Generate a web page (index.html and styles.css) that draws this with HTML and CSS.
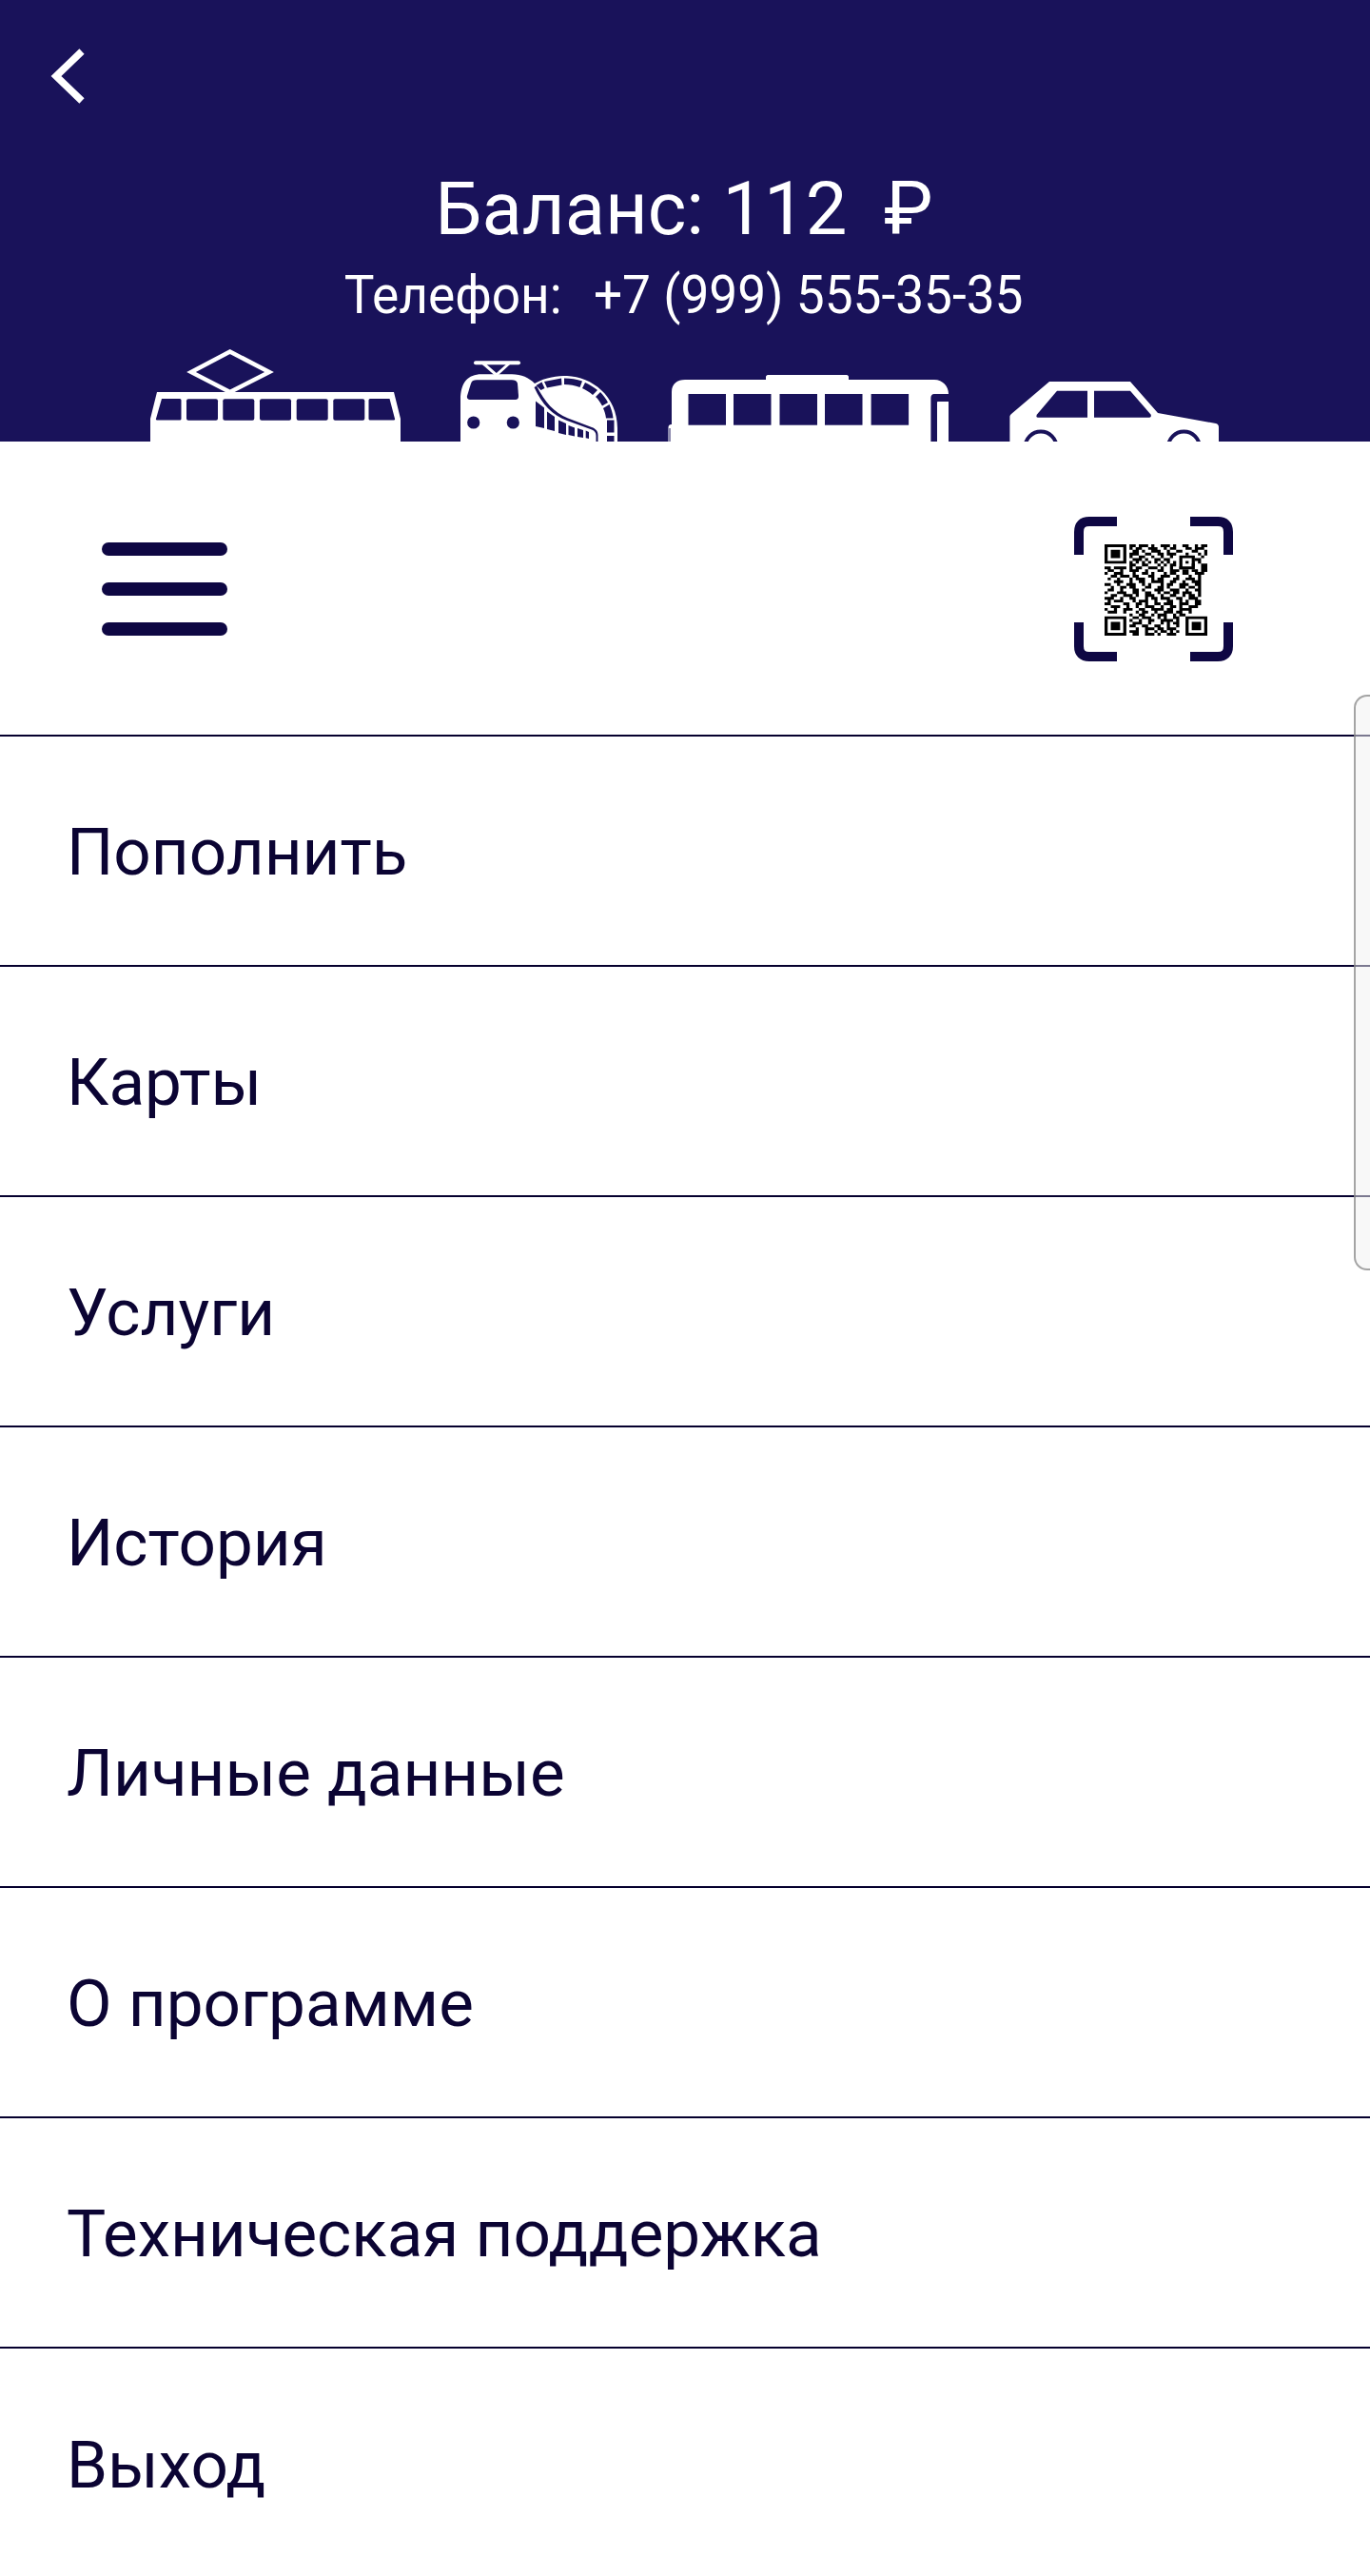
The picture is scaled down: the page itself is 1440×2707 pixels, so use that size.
FILE: index.html
```html
<!DOCTYPE html>
<html lang="ru">
<head>
<meta charset="utf-8">
<title>Меню</title>
<link rel="stylesheet" href="styles.css">
</head>
<body>
<div class="page">
  <header class="hero">
    <a class="back" href="#" aria-label="Назад">
      <svg class="back-icon" viewBox="0 0 38 60"><path d="M34 4 7 30l27 26"/></svg>
    </a>
    <div class="balance">Баланс: 112&nbsp; ₽</div>
    <div class="phone"><span>Телефон:</span><span>+7 (999) 555-35-35</span></div>
    <svg class="transport" viewBox="158 365 1124 99" aria-hidden="true">
      <g class="tr-line">
        <path d="M241.7 369.5 283 391 241.7 412 201 391z" stroke-width="4.5"/>
      </g>
      <path class="tr-fill" d="M165 412H414L421 440V464H158V440Z"/>
      <g class="tr-dark">
        <path d="M170 419h19a1.500 1.500 0 0 1 1.500 1.500V440a1.500 1.500 0 0 1-1.500 1.500H165a1 1 0 0 1-1-1.500z"/>
        <rect x="196" y="419.300" width="33" height="22.400" rx="2"/>
        <rect x="234.300" y="419.300" width="33" height="22.400" rx="2"/>
        <rect x="273" y="419.300" width="33" height="22.400" rx="2"/>
        <rect x="311.700" y="419.300" width="33" height="22.400" rx="2"/>
        <rect x="350.300" y="419.300" width="33" height="22.400" rx="2"/>
        <path d="M390.500 419h19l5.500 21a1 1 0 0 1-1 1.500h-25a1.500 1.500 0 0 1-1.500-1.500v-19.500a1.500 1.500 0 0 1 1.500-1.500z"/>
      </g>

      <rect class="tr-fill" x="498" y="379.300" width="49" height="4" rx="2"/>
      <path class="tr-line" d="M508 382l13.700 12L535 382" stroke-width="3"/>
      <path class="tr-fill" d="M562 403C574 396 586 395 596 395 622 396 649 416 649 450V464H484V420C484 402 492 393.300 506 393.300H538C548 393.300 556 397 562 403Z"/>
      <g class="tr-dark">
        <path d="M501 399.300H538C541 399.300 543 400 544 403L545 416C545 419 544 420 541 420H494C491.500 420 490.500 418 491 416L495 403C496 400 498 399.300 501 399.300Z"/>
        <circle cx="497.700" cy="444" r="6.600"/>
        <circle cx="539.300" cy="444" r="6.600"/>
        <path d="M563.500 405l6-3.500 3 6.500-4 2z"/>
        <path d="M572 401l18-3.500 0.500 7-15.500 3z"/>
        <path d="M593 397.500c7 0 13 1 19 3l-2.500 6.500c-5-2-11-3-16.500-3z"/>
        <path d="M615 402c5 2 9 5 13 8l-5 5c-3-3-7-5-11-7z"/>
        <path d="M631 412c3 3 6 7 8 11l-6 3.500c-2-3-4-7-7-9.500z"/>
        <path d="M640.500 425c2 5 3.500 9 4 14.500h-7.500c-0.500-4-1.500-7-3-10.500z"/>
        <rect x="638" y="441.500" width="7.500" height="13"/>
        <rect x="638" y="458" width="7.500" height="6"/>
        <path d="M561.500 407C570 425 580 436 596 442L622 451.500C625 452.500 626.500 455 626.500 458V464H628.500V457C628.500 453 626 450.500 622 449L597 439.500C582 433 573 423 564 405.500Z"/>
        <path d="M563 421.500l9 7v21.500l-9-2z"/>
        <path d="M575 432.500l8 5.500v15l-8-2z"/>
        <path d="M587 441.500l8 3.500v12l-8-2z"/>
        <path d="M597.500 447l6.500 2.500V458.500l-6.500-1.500z"/>
        <path d="M607 450l6 2v8l-6-1z"/>
        <path d="M615.700 452.500l3.300 1.500v7l-3.300-.7z"/>
      </g>

      <path class="tr-fill" d="M706 464V412C706 403 712 399 720 399H805V396C805 395 806 394 807 394H890C891 394 892 395 892 396V399H982C991 399 997 406 997 414V464Z"/>
      <path class="tr-fill" d="M702.500 464V449C702.500 447 704 446 705.500 446H711.600V464Z"/>
      <rect class="tr-dark" x="703.500" y="450" width="1" height="14"/>
      <g class="tr-dark">
        <rect x="723.500" y="414" width="39.500" height="32.700"/>
        <rect x="771" y="414" width="39.500" height="32.700"/>
        <rect x="819.500" y="414" width="39.500" height="32.700"/>
        <rect x="867" y="414" width="39.500" height="32.700"/>
        <rect x="915.600" y="414" width="39.500" height="32.700"/>
        <path d="M997 414H982C979.500 414 978.400 416 978.400 418V464H985V423C985 422.300 985.500 422 986 422H997Z"/>
      </g>

      <path class="tr-fill" d="M1103 401H1188L1217 434 1278 445C1280 445.500 1281 447 1281 449V464H1061.400V438C1061.400 437 1062 436 1063 435Z"/>
      <g class="tr-dark">
        <path d="M1111 410.700H1143V438.700H1091C1089 438.700 1089 437 1090 435.500Z"/>
        <path d="M1150 410.700H1188L1209.500 435.500C1210.500 437 1209.500 438.700 1208 438.700H1150Z"/>
      </g>
      <g class="tr-arch">
        <circle cx="1094" cy="470" r="16.500"/>
        <circle cx="1244.400" cy="470" r="16.500"/>
      </g>
    </svg>
  </header>

  <div class="toolbar">
    <button class="burger" type="button" aria-label="Меню">
      <span class="burger-bar"></span>
      <span class="burger-bar"></span>
      <span class="burger-bar"></span>
    </button>
    <div class="qr">
      <svg class="qr-frame" viewBox="0 0 167 152" aria-hidden="true">
        <path d="M45 5H16Q5 5 5 16V40M122 5H151Q162 5 162 16V40M5 111V136Q5 147 16 147H45M162 111V136Q162 147 151 147H122"/>
      </svg>
      <svg class="qr-code" viewBox="0 0 33 33" preserveAspectRatio="none" aria-hidden="true">
        <path fill-rule="evenodd" d="M0 0h7v7H0zM1 1v5h5V1zM2 2h3v3H2zM0 26h7v7H0zM1 27v5h5v-5zM2 28h3v3H2zM26 26h7v7h-7zM27 27v5h5v-5zM28 28h3v3h-3zM24 4h5v5h-5zM25 5v3h3V5zM26 6h1v1h-1z"/>
        <path class="qr-bits" d="M8 .5h2m1 0h3m1 0h1m2 0h3m1 0h1m2 0h2m2 0h1m1 0h2M8 1.500h1m1 0h2m2 0h3m2 0h1m1 0h2m3 0h2m1 0h3M9 2.500h2m1 0h1m2 0h3m2 0h1m2 0h2m3 0h2m2 0h1M8 3.500h3m2 0h2m2 0h2m1 0h3m3 0h1m3 0h1m1 0h1M8 4.500h1m2 0h2m2 0h1m2 0h1m2 0h1m9 0h1M9 5.500h3m1 0h1m2 0h2m1 0h2m8 0h2M8 6.500h1m1 0h1m1 0h1m1 0h1m1 0h1m1 0h1m1 0h1m1 0h1m7 0h1M8 7.500h2m2 0h2m3 0h1m1 0h1m1 0h2m5 0h1m2 0h3M0 8.500h2m1 0h4m1 0h1m1 0h2m2 0h3m1 0h1m2 0h1m2 0h1m6 0h2M1 9.500h2m2 0h1m2 0h3m2 0h1m3 0h2m2 0h3m1 0h2m1 0h2m1 0h2M0 10.500h1m2 0h3m3 0h1m2 0h2m1 0h1m3 0h1m1 0h2m2 0h2m2 0h3M2 11.500h2m1 0h3m1 0h2m3 0h2m2 0h3m2 0h1m3 0h1m2 0h1M1 12.500h1m2 0h1m3 0h1m1 0h3m2 0h1m1 0h2m3 0h2m2 0h3m1 0h1M3 13.500h3m2 0h1m2 0h2m2 0h4m2 0h2m2 0h1m2 0h3M0 14.500h2m2 0h1m2 0h3m2 0h1m1 0h1m3 0h1m1 0h2m2 0h3m2 0h2M2 15.500h1m2 0h2m1 0h2m3 0h2m2 0h2m1 0h1m3 0h2m1 0h2m1 0h1M1 16.500h2m2 0h1m3 0h2m1 0h1m3 0h3m2 0h3m2 0h1m2 0h2M0 17.500h1m3 0h3m2 0h2m2 0h2m2 0h1m1 0h2m1 0h2m1 0h3m2 0h1M2 18.500h2m2 0h3m1 0h1m2 0h3m2 0h1m2 0h2m2 0h1m1 0h2m1 0h1M0 19.500h3m2 0h1m2 0h2m3 0h1m1 0h2m1 0h3m2 0h2m2 0h3M1 20.500h1m1 0h3m3 0h1m1 0h3m2 0h1m3 0h2m2 0h1m1 0h1m2 0h2M0 21.500h2m4 0h2m2 0h2m1 0h1m2 0h2m1 0h3m2 0h3m2 0h2M2 22.500h3m2 0h1m2 0h1m2 0h3m2 0h1m2 0h2m1 0h1m2 0h3M0 23.500h1m2 0h1m2 0h3m2 0h2m2 0h4m1 0h2m2 0h4M1 24.500h3m2 0h1m3 0h1m1 0h2m2 0h1m2 0h3m1 0h2m2 0h1M8 25.500h1m2 0h2m2 0h1m1 0h3m2 0h1m1 0h2M9 26.500h2m1 0h3m2 0h1m1 0h1m2 0h2M8 27.500h1m2 0h1m2 0h2m2 0h4m1 0h1M9 28.500h3m2 0h1m3 0h1m1 0h1m1 0h2M8 29.500h2m2 0h2m2 0h2m2 0h1m2 0h1M10 30.500h1m2 0h3m1 0h2m1 0h3M8 31.500h3m2 0h1m2 0h1m1 0h2m1 0h1m1 0h1M9 32.500h2m2 0h3m1 0h1m2 0h3"/>
      </svg>
    </div>
  </div>

  <nav class="menu">
    <a class="menu-item" href="#">Пополнить</a>
    <a class="menu-item" href="#">Карты</a>
    <a class="menu-item" href="#">Услуги</a>
    <a class="menu-item" href="#">История</a>
    <a class="menu-item" href="#">Личные данные</a>
    <a class="menu-item" href="#">О программе</a>
    <a class="menu-item" href="#">Техническая поддержка</a>
    <a class="menu-item" href="#">Выход</a>
  </nav>

  <div class="edge-handle"></div>
</div>
</body>
</html>
```
FILE: styles.css
```css
* { box-sizing: border-box; }
html, body { margin: 0; padding: 0; background: #fff; }
body { font-family: Roboto, "Liberation Sans", sans-serif; }
.page { position: relative; width: 1440px; height: 2707px; overflow: hidden; background: #fff; }

.hero {
  height: 464px;
  background: #19125a;
  color: #fff;
  display: flex;
  flex-direction: column;
  align-items: center;
  overflow: hidden;
}
.back { align-self: flex-start; display: block; margin: 50px 0 0 52px; height: 60px; }
.back-icon { display: block; width: 38px; height: 60px; fill: none; stroke: #fff; stroke-width: 7.5; }
.balance { margin-top: 66px; margin-right: 2px; font-size: 77.7px; line-height: 88px; white-space: pre; }
.phone {
  display: flex;
  gap: 35px;
  margin-top: 13px;
  margin-right: 3px;
  font-size: 56px;
  line-height: 66px;
  white-space: pre;
  transform: scaleX(0.95);
}
.transport { display: block; flex: none; margin-top: 22px; width: 1124px; height: 99px; }
.tr-fill { fill: #fff; }
.tr-dark { fill: #19125a; }
.tr-line { fill: none; stroke: #fff; }
.tr-arch { fill: #fff; stroke: #19125a; stroke-width: 4; }

.toolbar {
  height: 310px;
  padding: 2px 144px 0 107px;
  border-bottom: 2px solid #05002e;
  display: flex;
  align-items: center;
  justify-content: space-between;
}
.burger {
  display: flex;
  flex-direction: column;
  gap: 28px;
  width: 132px;
  padding: 0;
  border: 0;
  background: none;
}
.burger-bar { display: block; height: 14px; border-radius: 7px; background: #0e0743; }
.qr { position: relative; width: 167px; height: 152px; }
.qr-frame { display: block; width: 167px; height: 152px; fill: none; stroke: #0e0743; stroke-width: 10; }
.qr-code { position: absolute; left: 31.5px; top: 29px; width: 108px; height: 96px; fill: #000; }
.qr-bits { fill: none; stroke: #000; stroke-width: 1; }

.menu { display: flex; flex-direction: column; }
.menu-item {
  display: flex;
  align-items: center;
  height: 242px;
  padding: 4px 0 0 70px;
  border-bottom: 2px solid #05002e;
  color: #0b0433;
  font-size: 69.2px;
  line-height: 80px;
  text-decoration: none;
}
.menu-item:last-child { border-bottom: 0; }

.edge-handle {
  position: absolute;
  top: 730px;
  right: 0;
  width: 17px;
  height: 605px;
  background: rgba(241, 241, 241, 0.5);
  border: 2px solid rgba(120, 120, 120, 0.65);
  border-right: 0;
  border-radius: 14px 0 0 14px;
}
```
